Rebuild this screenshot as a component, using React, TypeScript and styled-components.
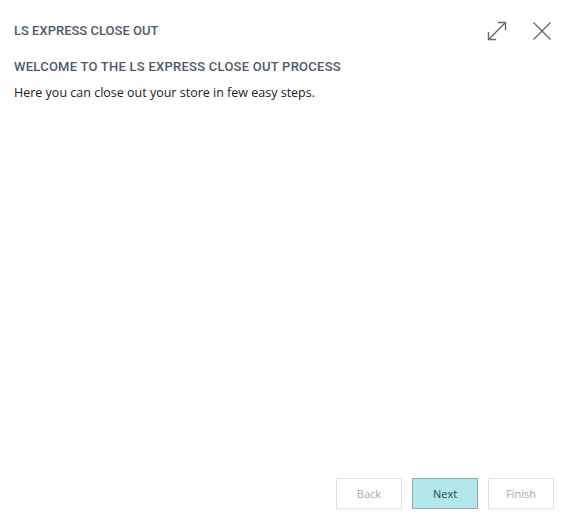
import React from "react";
import styled, { createGlobalStyle } from "styled-components";

const Global = createGlobalStyle`
  html, body { margin: 0; padding: 0; background: #ffffff; }
  #root { height: 525px; }
  * { box-sizing: border-box; }
`;

const Dialog = styled.div`
  height: 525px;
  display: flex;
  flex-direction: column;
  padding: 0 18px 16px 14px;
  font-family: "Open Sans", "Noto Sans", sans-serif;
`;

const Header = styled.div`
  display: flex;
  align-items: center;
  justify-content: space-between;
  height: 40px;
  margin-top: 10px;
`;

const Caption = styled.h1`
  margin: 0;
  font-family: Roboto, "Liberation Sans", sans-serif;
  font-weight: 500;
  font-size: 13px;
  color: #505a6a;
`;

const Tools = styled.div`
  display: flex;
  gap: 25px;
  align-items: center;
  margin-right: 2px;
  margin-top: 2px;
`;

const IconButton = styled.button`
  border: 0;
  background: transparent;
  padding: 0;
  width: 20px;
  height: 20px;
  display: flex;
  cursor: pointer;
`;

const Content = styled.div`
  flex: 1;
  padding-top: 9px;
`;

const Heading = styled.h2`
  margin: 0 0 10px;
  font-family: Roboto, "Liberation Sans", sans-serif;
  font-weight: 500;
  font-size: 13px;
  letter-spacing: 0.25px;
  color: #505a6a;
`;

const Text = styled.p`
  margin: 0;
  font-size: 12.5px;
  color: #212121;
`;

const Footer = styled.div`
  display: flex;
  justify-content: flex-end;
  gap: 10px;
`;

const Btn = styled.button<{ $primary?: boolean }>`
  width: 66px;
  height: 31px;
  font-family: "Open Sans", "Noto Sans", sans-serif;
  font-size: 11px;
  border: 1px solid ${(p) => (p.$primary ? "#a0a4a8" : "#e0e0e0")};
  background: ${(p) => (p.$primary ? "#b2e7ec" : "#ffffff")};
  color: ${(p) => (p.$primary ? "#2b3a57" : "#a8a8a8")};
  padding: 0;
`;

export default function App() {
  return (
    <>
      <Global />
      <Dialog>
        <Header>
          <Caption>LS EXPRESS CLOSE OUT</Caption>
          <Tools>
            <IconButton aria-label="Expand">
              <svg width="20" height="20" viewBox="0 0 20 20" fill="none" stroke="#6a6a6a" strokeWidth="1.4">
                <path d="M1.5 18.5 L18.5 1.5" />
                <path d="M11 1.5 H18.5 V9" />
                <path d="M1.5 11 V18.5 H9" />
              </svg>
            </IconButton>
            <IconButton aria-label="Close">
              <svg width="20" height="20" viewBox="0 0 20 20" fill="none" stroke="#6a6a6a" strokeWidth="1.4">
                <path d="M1.5 1.5 L18.5 18.5 M18.5 1.5 L1.5 18.5" />
              </svg>
            </IconButton>
          </Tools>
        </Header>
        <Content>
          <Heading>WELCOME TO THE LS EXPRESS CLOSE OUT PROCESS</Heading>
          <Text>Here you can close out your store in few easy steps.</Text>
        </Content>
        <Footer>
          <Btn disabled>Back</Btn>
          <Btn $primary>Next</Btn>
          <Btn disabled>Finish</Btn>
        </Footer>
      </Dialog>
    </>
  );
}
